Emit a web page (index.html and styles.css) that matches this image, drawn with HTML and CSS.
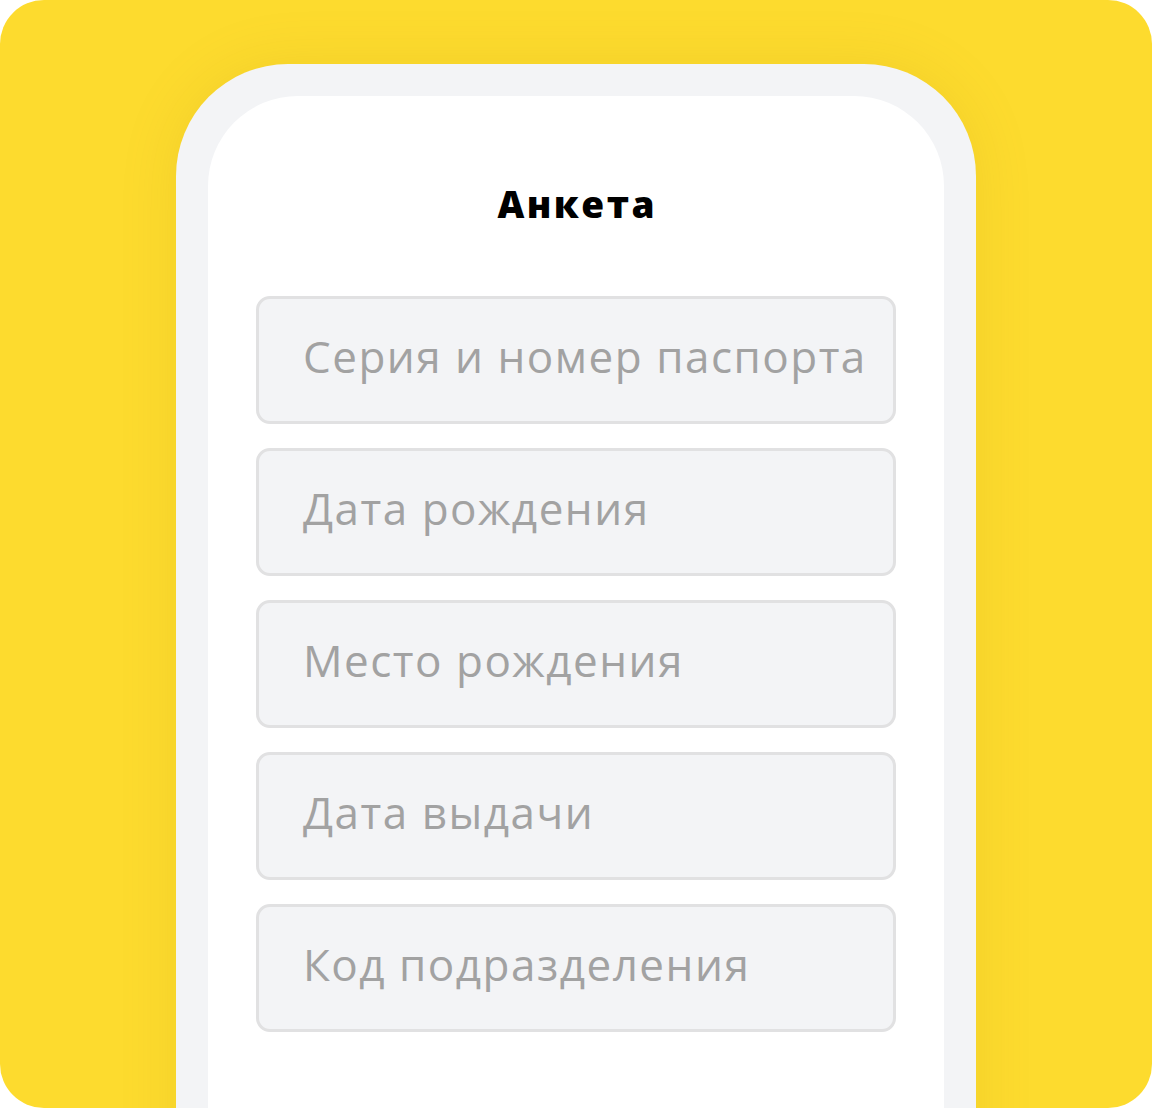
FILE: index.html
```html
<!DOCTYPE html>
<html lang="ru">
<head>
<meta charset="utf-8">
<link rel="stylesheet" href="styles.css">
</head>
<body>
<div class="canvas">
  <div class="phone">
    <div class="screen">
      <h1 class="title">Анкета</h1>
      <div class="form">
        <div class="field">Серия и номер паспорта</div>
        <div class="field">Дата рождения</div>
        <div class="field">Место рождения</div>
        <div class="field">Дата выдачи</div>
        <div class="field">Код подразделения</div>
      </div>
    </div>
  </div>
</div>
</body>
</html>
```

FILE: styles.css
```css
html, body {
  margin: 0;
  padding: 0;
  background: #ffffff;
}
.canvas {
  width: 1152px;
  height: 1108px;
  background: #fddb2e;
  border-radius: 44px;
  overflow: hidden;
  box-sizing: border-box;
  padding: 64px 176px 0 176px;
  font-family: "Open Sans", "Liberation Sans", sans-serif;
}
.phone {
  height: 1100px;
  background: #f3f4f6;
  border-radius: 112px 112px 0 0;
  padding: 32px 32px 0 32px;
  box-shadow: 0 0 60px rgba(160, 120, 0, 0.12);
}
.screen {
  height: 100%;
  background: #ffffff;
  border-radius: 90px 90px 0 0;
  padding: 86px 48px 0 48px;
  box-sizing: border-box;
}
.title {
  margin: 0;
  text-align: center;
  font-size: 37px;
  line-height: 44px;
  font-weight: 800;
  color: #000;
  letter-spacing: 2.5px;
  text-indent: 2.5px;
}
.form {
  margin-top: 70px;
  display: flex;
  flex-direction: column;
  gap: 24px;
}
.field {
  height: 128px;
  box-sizing: border-box;
  background: #f3f4f6;
  border: 3px solid #e1e1e2;
  border-radius: 14px;
  padding: 0 0 8px 44px;
  display: flex;
  align-items: center;
  font-size: 44px;
  color: #a2a2a2;
  letter-spacing: 1.5px;
}
```
